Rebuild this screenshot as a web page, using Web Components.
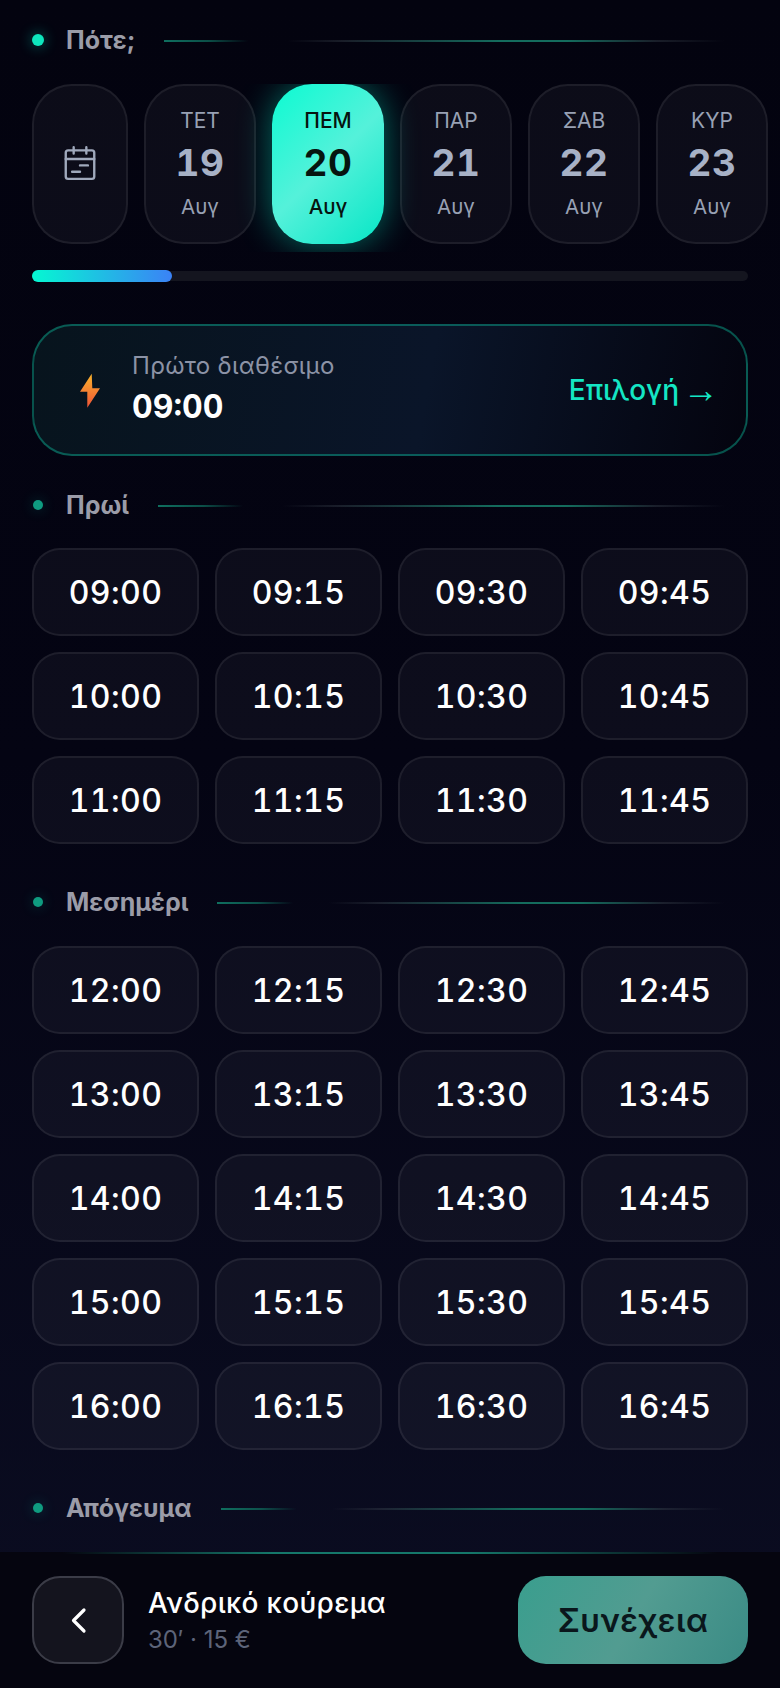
<!DOCTYPE html>
<html lang="el">
<head>
<meta charset="utf-8">
<title>Πότε;</title>
<style>
  html, body { margin: 0; height: 100%; background: #03030f; }
  body { font-family: Inter, "Noto Sans", sans-serif; color: #fff; }
</style>
</head>
<body>
<booking-screen>
  <section-title size="lead">Πότε;</section-title>
  <date-strip></date-strip>
  <first-slot time="09:00"></first-slot>
  <section-title gap="31">Πρωί</section-title>
  <time-grid from="9" to="11" top="25"></time-grid>
  <section-title gap="40">Μεσημέρι</section-title>
  <time-grid from="12" to="16" top="26"></time-grid>
  <section-title gap="40">Απόγευμα</section-title>
  <summary-bar slot="footer" name="Ανδρικό κούρεμα" meta="30′ · 15 €"></summary-bar>
</booking-screen>

<script>
/**
 * Define an element whose shadow root is set from a style and a markup string.
 */
function shadow(host, css, html) {
  host.attachShadow({mode: 'open'});
  host.shadowRoot.innerHTML = `<style>${css}</style>${html}`;
}

class BookingScreen extends HTMLElement {
  constructor() {
    super();
    shadow(this, `
      :host { display: flex; flex-direction: column; height: 1688px; overflow: hidden;
        background: linear-gradient(180deg, #03030f 0%, #040413 45%, #0b0d22 100%); }
      main { flex: 1; min-height: 0; padding: 22px 32px 0; overflow: hidden; }
    `, `<main><slot></slot></main><slot name="footer"></slot>`);
  }
}

/**
 * Section heading: glowing dot, label and a fading line.
 */
class SectionTitle extends HTMLElement {
  constructor() {
    super();
    const lead = this.getAttribute('size') === 'lead';
    const gap = this.getAttribute('gap') || 0;
    shadow(this, `
      :host { display: flex; align-items: center; height: 36px; margin-top: ${gap}px; }
      i { flex: none; width: ${lead ? 12 : 10}px; height: ${lead ? 12 : 10}px; margin: 0 ${lead ? 22 : 23}px 0 ${lead ? 0 : 1}px;
        border-radius: 50%; background: ${lead ? '#0ee6bd' : '#0f9b80'};
        box-shadow: 0 0 14px ${lead ? 'rgba(0,255,213,.45)' : 'rgba(0,255,213,.22)'}; }
      span { flex: none; font-size: 25px; font-weight: 700; color: #9b9ca8; line-height: 36px; }
      b { flex: 1; height: 2px; margin: 2px 24px 0 29px;
        background: linear-gradient(90deg, #0f6f5f 0%, rgba(15,111,95,.7) 8%, rgba(15,111,95,0) 15%,
          rgba(60,70,80,0) 22%, rgba(60,70,80,.4) 32%, #146c5d 60%, #146c5d 72%, rgba(60,70,80,.4) 88%, rgba(60,70,80,0) 100%); }
    `, `<i></i><span><slot></slot></span><b></b>`);
  }
}

/**
 * One day in the date strip, or the calendar button when it has no day.
 */
class DateCard extends HTMLElement {
  constructor() {
    super();
    shadow(this, `
      :host { flex: none; display: flex; flex-direction: column; align-items: center; justify-content: center;
        box-sizing: border-box; width: 112px; height: 160px; border-radius: 40px;
        border: 2px solid rgba(255,255,255,.07); background: rgba(255,255,255,.038); }
      :host([calendar]) { width: 96px; }
      :host([active]) { border: 0;
        background: linear-gradient(135deg, #0bfbd2 0%, #55f1da 50%, #06e6c6 100%);
        box-shadow: 0 0 34px rgba(0,255,213,.42); }
      .dow { font-size: 21px; line-height: 26px; color: #98a1b4; }
      .num { font-size: 37px; line-height: 46px; font-weight: 700; color: #a7b1c6; margin: 6px 0 8px;
        letter-spacing: .5px; font-variant-numeric: tabular-nums; }
      .mon { font-size: 20.5px; line-height: 26px; color: #98a1b4; }
      :host([active]) .dow { color: #06140f; font-weight: 500; }
      :host([active]) .num { color: #06140f; }
      :host([active]) .mon { color: #06140f; font-weight: 500; }
      svg { width: 38px; height: 38px; display: block; margin-top: -2px; }
    `, this.hasAttribute('calendar')
      ? `<svg viewBox="0 0 24 24" fill="none" stroke="#a0a9bc" stroke-width="1.5" stroke-linecap="round" stroke-linejoin="round">
           <rect x="3" y="4" width="18" height="18" rx="1.5"/><path d="M8 2v4M16 2v4M3 9.5h18M17 13.5h-5M12 17.5H7"/>
         </svg>`
      : `<div class="dow">${this.getAttribute('dow')}</div>
         <div class="num">${this.getAttribute('num')}</div>
         <div class="mon">Αυγ</div>`);
  }
}

/**
 * The horizontal date scroller with its progress bar.
 */
class DateStrip extends HTMLElement {
  constructor() {
    super();
    const days = [['ΤΕΤ', 19], ['ΠΕΜ', 20], ['ΠΑΡ', 21], ['ΣΑΒ', 22], ['ΚΥΡ', 23]];
    const cards = days.map(([dow, num]) =>
      `<date-card dow="${dow}" num="${num}" ${num === 20 ? 'active' : ''}></date-card>`).join('');
    shadow(this, `
      :host { display: block; margin: 26px -32px 0; }
      .scroll { display: flex; gap: 16px; padding: 0 32px 8px; overflow: hidden; }
      .track { position: relative; height: 10px; margin: 19px 32px 0; border-radius: 5px; background: #14151f; }
      .thumb { position: absolute; left: 0; top: -1px; width: 140px; height: 12px; border-radius: 6px;
        background: linear-gradient(90deg, #05f8d2 0%, #3b82f6 100%); }
    `, `<div class="scroll"><date-card calendar></date-card>${cards}</div>
        <div class="track"><div class="thumb"></div></div>`);
  }
}

/**
 * Shortcut card for the first free time.
 */
class FirstSlot extends HTMLElement {
  constructor() {
    super();
    shadow(this, `
      :host { display: flex; align-items: center; box-sizing: border-box; height: 132px; margin-top: 43px;
        padding: 0 27px 0 46px; border-radius: 40px; border: 2px solid rgba(13,190,160,.42);
        background: linear-gradient(100deg, #07141d 0%, #0a1529 55%, #04040f 100%); }
      svg { flex: none; width: 20px; height: 35px; margin-right: 32px; }
      .text { flex: 1; margin-bottom: 3px; }
      .label { font-size: 24px; line-height: 32px; color: #8c93a6; letter-spacing: .3px; }
      .time { font-size: 32px; line-height: 42px; font-weight: 700; color: #fff; margin-top: 4px;
        font-variant-numeric: tabular-nums; }
      .pick { font-size: 28px; font-weight: 500; color: #14e6c4; display: flex; align-items: center; gap: 4px; }
      .arrow { font-family: "Liberation Sans", sans-serif; font-size: 36px; line-height: 1; font-weight: 400; }
    `, `<svg viewBox="0 0 20 35">
          <defs><linearGradient id="b" x1="0" y1="0" x2="0" y2="1">
            <stop offset="0" stop-color="#fbb52c"/><stop offset="1" stop-color="#ef5237"/>
          </linearGradient></defs>
          <path fill="url(#b)" d="M11.7.7 0 18.7h7.3v16L20 15.3h-7.7z"/>
        </svg>
        <div class="text">
          <div class="label">Πρώτο διαθέσιμο</div>
          <div class="time">${this.getAttribute('time')}</div>
        </div>
        <div class="pick">Επιλογή <span class="arrow">→</span></div>`);
  }
}

/**
 * A single bookable time.
 */
class TimeSlot extends HTMLElement {
  constructor() {
    super();
    shadow(this, `
      :host { display: flex; align-items: center; justify-content: center; box-sizing: border-box; height: 88px;
        border-radius: 28px; border: 2px solid rgba(255,255,255,.07); background: rgba(255,255,255,.038);
        font-size: 32px; font-weight: 500; letter-spacing: .4px; color: #fff; font-variant-numeric: tabular-nums; }
    `, `<slot></slot>`);
  }
}

/**
 * Grid of quarter-hour slots for a range of hours.
 */
class TimeGrid extends HTMLElement {
  constructor() {
    super();
    const from = Number(this.getAttribute('from'));
    const to = Number(this.getAttribute('to'));
    const top = this.getAttribute('top') || 25;
    let slots = '';
    for (let hour = from; hour <= to; hour++) {
      for (const min of ['00', '15', '30', '45']) {
        slots += `<time-slot>${String(hour).padStart(2, '0')}:${min}</time-slot>`;
      }
    }
    shadow(this, `
      :host { display: grid; grid-template-columns: repeat(4, 1fr); gap: 16px; margin-top: ${top}px; }
    `, slots);
  }
}

/**
 * Fixed bottom bar with back button, service summary and continue.
 */
class SummaryBar extends HTMLElement {
  constructor() {
    super();
    shadow(this, `
      :host { position: relative; flex: none; display: flex; align-items: center; box-sizing: border-box;
        height: 136px; padding: 0 32px; background: #05050f; }
      :host::before { content: ''; position: absolute; left: 0; right: 0; top: 0; height: 2px;
        background: linear-gradient(90deg, transparent 8%, #15786a 35%, #15786a 60%, transparent 92%); }
      button { font: inherit; box-sizing: border-box; height: 88px; cursor: pointer; }
      .back { flex: none; width: 92px; display: flex; align-items: center; justify-content: center; padding: 0;
        border-radius: 28px; border: 2px solid #3b3c47; background: #14141e; }
      .back svg { width: 17px; height: 27px; }
      .info { flex: 1; margin-left: 24px; }
      .name { font-size: 28px; line-height: 36px; font-weight: 500; color: #fff; letter-spacing: .3px; }
      .meta { font-size: 24px; line-height: 32px; color: #5d6479; margin-top: 3px; }
      .next { flex: none; width: 230px; border: 0; border-radius: 28px; font-size: 32px; font-weight: 600;
        letter-spacing: .5px; color: #0a171c; background: linear-gradient(120deg, #3a9e8e 0%, #529c91 50%, #3a8b85 100%); }
    `, `<button class="back" aria-label="Πίσω">
          <svg viewBox="0 0 17 27" fill="none" stroke="#fff" stroke-width="3.2" stroke-linecap="round" stroke-linejoin="round"><path d="M14 3 3.5 13.5 14 24"/></svg>
        </button>
        <div class="info">
          <div class="name">${this.getAttribute('name')}</div>
          <div class="meta">${this.getAttribute('meta')}</div>
        </div>
        <button class="next">Συνέχεια</button>`);
  }
}

// Define the children first so the parents' markup upgrades on creation.
customElements.define('section-title', SectionTitle);
customElements.define('date-card', DateCard);
customElements.define('date-strip', DateStrip);
customElements.define('first-slot', FirstSlot);
customElements.define('time-slot', TimeSlot);
customElements.define('time-grid', TimeGrid);
customElements.define('summary-bar', SummaryBar);
customElements.define('booking-screen', BookingScreen);
</script>
</body>
</html>
